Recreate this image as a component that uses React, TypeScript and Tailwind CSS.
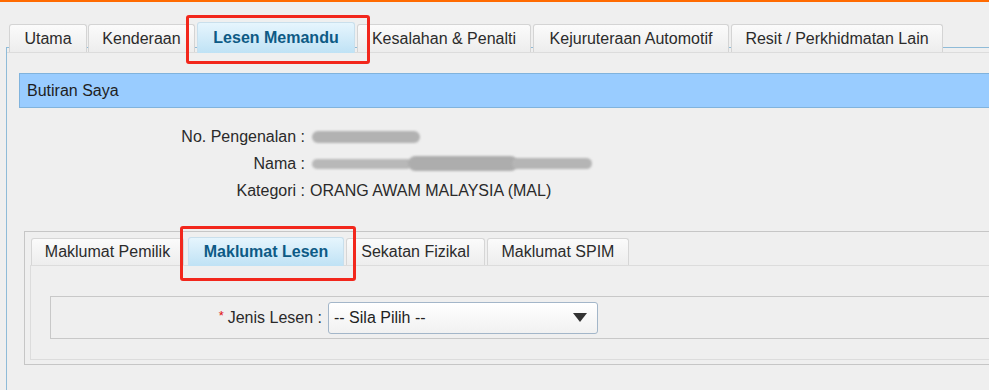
import React from "react";

const inactiveTab =
  "flex items-center justify-center h-[28px] rounded-t-[3px] border border-b-0 border-[#d4d4d4] bg-gradient-to-b from-[#fbfbfb] to-[#ededed] text-[#2b2b2b] text-[16px] whitespace-nowrap";
const activeTab =
  "relative z-10 flex items-center justify-center h-[31px] -mb-[1px] rounded-t-[3px] border border-b-0 border-[#c9dfec] bg-gradient-to-b from-[#e6f5fd] to-[#bfe2f5] text-[#0d5a85] font-bold text-[16px] whitespace-nowrap";

const innerInactive =
  "flex items-center justify-center h-[27px] rounded-t-[3px] border border-b-0 border-[#d6d6d6] bg-gradient-to-b from-[#fbfbfb] to-[#ededed] text-[#2b2b2b] text-[16px] whitespace-nowrap";
const innerActive =
  "relative z-10 flex items-center justify-center h-[29px] -mb-[1px] rounded-t-[3px] border border-b-0 border-[#c9dfec] bg-gradient-to-b from-[#e6f5fd] to-[#bfe2f5] text-[#0d5a85] font-bold text-[16px] whitespace-nowrap";

export default function App() {
  return (
    <div className="relative w-[989px] h-[390px] overflow-hidden bg-[#efefef] font-['Liberation_Sans',Arial,sans-serif]">
      <div className="h-[2px] bg-[#ff6a00]" />

      {/* main panel */}
      <div className="ml-[6px] mt-[45px] w-[1010px] h-[343px] border-l border-t border-[#8fbbd8]">
        {/* top tabs */}
        <div className="-mt-[26px] h-[31px] flex items-end border-b border-[#dcdcdc] pl-[2px]">
          <div className={inactiveTab + " w-[78px]"}>Utama</div>
          <div className={inactiveTab + " w-[107px] ml-[1px]"}>Kenderaan</div>
          <div className={activeTab + " w-[158px] ml-[2px]"}>Lesen Memandu</div>
          <div className={inactiveTab + " w-[174px] ml-[2px]"}>Kesalahan &amp; Penalti</div>
          <div className={inactiveTab + " w-[196px] ml-[2px]"}>Kejuruteraan Automotif</div>
          <div className={inactiveTab + " w-[212px] ml-[2px]"}>Resit / Perkhidmatan Lain</div>
        </div>

        {/* header */}
        <div className="mt-[20px] ml-[12px] h-[35px] border border-[#80b3dd] bg-[#99ccff] flex items-center pl-[7px] text-[16px] text-[#1e1e1e]">
          Butiran Saya
        </div>

        {/* info rows */}
        <div className="mt-[15px] text-[16px] text-[#2a2a2a]">
          <div className="flex items-center h-[27px]">
            <div className="w-[298px] text-right">No. Pengenalan :</div>
            <div className="ml-[7px] flex items-center">
              <div className="w-[108px] h-[12px] rounded-full bg-[#b2b2b2] blur-[1px]" />
            </div>
          </div>
          <div className="flex items-center h-[27px]">
            <div className="w-[298px] text-right">Nama :</div>
            <div className="ml-[7px] flex items-center">
              <div className="w-[100px] h-[10px] rounded-full bg-[#b8b8b8] blur-[1px]" />
              <div className="w-[110px] h-[15px] -ml-[4px] rounded-full bg-[#adadad] blur-[1px]" />
              <div className="w-[80px] h-[11px] -ml-[6px] rounded-full bg-[#b5b5b5] blur-[1px]" />
            </div>
          </div>
          <div className="flex items-center h-[27px]">
            <div className="w-[298px] text-right">Kategori :</div>
            <div className="ml-[5px]">ORANG AWAM MALAYSIA (MAL)</div>
          </div>
        </div>

        {/* inner tab panel */}
        <div className="mt-[27px] ml-[17px] h-[134px] border border-[#c6c6c6] pt-[5px] pl-[5px]">
          <div className="h-[28px] flex items-end">
            <div className={innerInactive + " w-[153px] ml-[1px]"}>Maklumat Pemilik</div>
            <div className={innerActive + " w-[156px] ml-[4px]"}>Maklumat Lesen</div>
            <div className={innerInactive + " w-[139px] ml-[2px]"}>Sekatan Fizikal</div>
            <div className={innerInactive + " w-[142px] ml-[2px]"}>Maklumat SPIM</div>
          </div>
          <div className="h-[95px] border border-[#dcdcdc] pt-[30px] pl-[19px]">
            <div className="h-[43px] border border-[#c8c8c8] flex items-center">
              <div className="w-[271px] text-right text-[16px] text-[#2a2a2a]">
                <span className="text-[#e01010] text-[13px] align-top mr-[4px]">*</span>
                Jenis Lesen :
              </div>
              <div className="ml-[6px] w-[270px] h-[32px] rounded-[3px] border border-[#a3b6c9] bg-gradient-to-b from-[#ffffff] to-[#f1f1f1] flex items-center justify-between pl-[5px] pr-[10px] text-[16px] text-[#222]">
                <span>-- Sila Pilih --</span>
                <svg width="14" height="9" viewBox="0 0 14 9">
                  <path d="M0 0 L14 0 L7 9 Z" fill="#333" />
                </svg>
              </div>
            </div>
          </div>
        </div>
      </div>

      {/* red highlight overlays */}
      <div className="absolute left-[186px] top-[15px] w-[184px] h-[49px] border-[3px] border-[#f2271c] rounded-[3px]" />
      <div className="absolute left-[180px] top-[226px] w-[176px] h-[55px] border-[3px] border-[#f2271c] rounded-[3px]" />
    </div>
  );
}
